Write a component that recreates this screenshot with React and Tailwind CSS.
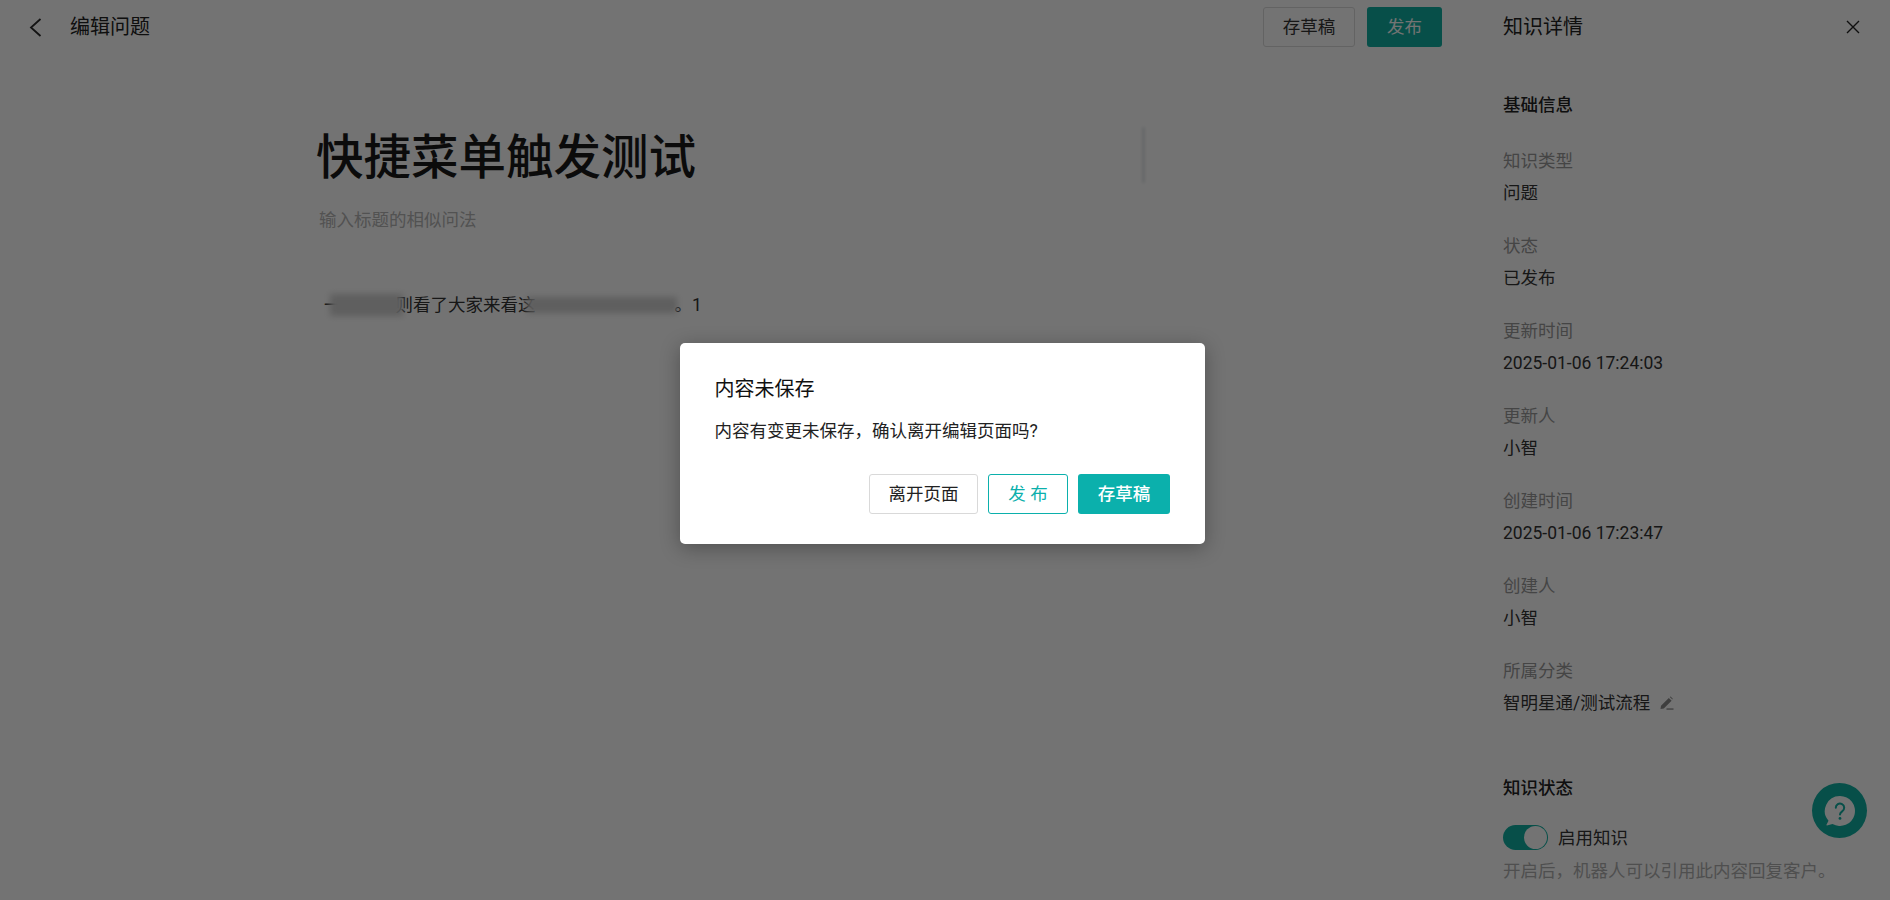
import React from "react";

const details = [
  { label: "知识类型", value: "问题" },
  { label: "状态", value: "已发布" },
  { label: "更新时间", value: "2025-01-06 17:24:03" },
  { label: "更新人", value: "小智" },
  { label: "创建时间", value: "2025-01-06 17:23:47" },
  { label: "创建人", value: "小智" },
];

const PencilIcon = () => (
  <svg width="14" height="15" viewBox="0 0 14 15" className="ml-[10px]">
    <path d="M0.5 13 L1 9.8 L8.8 2 L11.6 4.8 L3.8 12.6 Z M9.8 1 L10.6 0.5 L12.8 2.7 L12.4 3.6 Z" fill="#8a8a8a" />
    <rect x="6.5" y="12.4" width="7" height="1.3" fill="#8a8a8a" />
  </svg>
);

const HelpButton = () => (
  <button className="absolute top-[783px] right-[23px] flex h-[55px] w-[55px] items-center justify-center rounded-full bg-[#10b0a2]">
    <svg width="36" height="36" viewBox="0 0 36 36">
      <path d="M18 3 A15 15 0 1 1 10.5 31 L5 32.5 Q4 32.4 4.6 31.4 L6.5 27.8 A15 15 0 0 1 18 3 Z" fill="#fff" />
      <path
        d="M13.8 14.8 A4.2 4.2 0 1 1 20.2 18.3 C18.8 19.4 18 20 18 21.6"
        fill="none"
        stroke="#10b0a2"
        strokeWidth="2"
        strokeLinecap="round"
      />
      <circle cx="18" cy="25.4" r="1.4" fill="#10b0a2" />
    </svg>
  </button>
);

const App = () => {
  return (
    <div className="relative flex h-[900px] w-[1890px] overflow-hidden bg-white font-['Roboto','Noto_Sans_CJK_SC',sans-serif] text-[17.5px] leading-[26px] text-[#333]">
      {/* left: editor */}
      <div className="w-[1473px] shrink-0">
        <div className="flex h-[54px] items-center pl-[29px] pr-[31px]">
          <svg width="13" height="19" viewBox="0 0 13 19" fill="none" stroke="#2a2a2a" strokeWidth="1.8">
            <path d="M11.5 1 L2 9.5 L11.5 18" />
          </svg>
          <span className="ml-[28px] text-[20px] text-[#222]">编辑问题</span>
          <button className="ml-auto h-10 w-[92px] rounded-[3px] border border-[#dcdcdc] text-[#333]">存草稿</button>
          <button className="ml-[12px] h-10 w-[75px] rounded-[3px] bg-[#10b0a2] text-white">发布</button>
        </div>

        <div className="ml-[316px] flex w-[829px]">
          <div className="flex-1">
            <h1 className="mt-[72px] text-[47.5px] leading-[64px] font-medium text-[#1a1a1a]">快捷菜单触发测试</h1>
            <p className="mt-[17px] pl-[3px] leading-[26px] text-[#b5b5b5]">输入标题的相似问法</p>
            <div className="mt-[59px] flex items-center pl-[8px]">
              <span className="whitespace-nowrap">一</span>
              <span className="relative -ml-[12px] h-[22px] w-[73px] bg-[#d2d2d2] blur-[3px]" />
              <span className="-ml-[7px]">则看了大家来看这</span>
              <span className="relative -ml-[9px] h-[16px] w-[150px] bg-[#d2d2d2] blur-[3px]" />
              <span className="-ml-[2px]">。1</span>
            </div>
          </div>
          <div className="mt-[73px] h-[56px] w-[3px] rounded bg-[#e2e6e8] blur-[1.5px]" />
        </div>
      </div>

      {/* right: knowledge details */}
      <div className="flex-1 pl-[30px]">
        <div className="flex h-[54px] items-center justify-between pr-[30px]">
          <span className="text-[20px] text-[#222]">知识详情</span>
          <svg width="14" height="14" viewBox="0 0 14 14" stroke="#222" strokeWidth="1.4">
            <path d="M1 1 L13 13 M13 1 L1 13" />
          </svg>
        </div>

        <h2 className="mt-[38px] mb-[30px] font-medium text-[#222]">基础信息</h2>

        {details.map((item) => (
          <div key={item.label} className="mb-[27px]">
            <div className="text-[#999]">{item.label}</div>
            <div className="mt-[6px]">{item.value}</div>
          </div>
        ))}

        <div>
          <div className="text-[#999]">所属分类</div>
          <div className="mt-[6px] flex items-center">
            智明星通/测试流程
            <PencilIcon />
          </div>
        </div>

        <h2 className="mt-[59px] font-medium text-[#222]">知识状态</h2>
        <div className="mt-[24px] flex h-[25px] items-center">
          <div className="flex h-[25px] w-[45px] items-center justify-end rounded-full bg-[#10b0a2] pr-[1px]">
            <div className="h-[23px] w-[23px] rounded-full bg-white" />
          </div>
          <span className="ml-[10px]">启用知识</span>
        </div>
        <p className="mt-[8px] text-[#b0b0b0]">开启后，机器人可以引用此内容回复客户。</p>
      </div>

      <HelpButton />

      {/* modal */}
      <div className="absolute inset-0 flex items-start justify-center bg-black/55 pt-[343px] pr-[5px]">
        <div className="h-[201px] w-[525px] rounded-[5px] bg-white pr-[35px] pl-[34.5px] pt-[32px] shadow-[0_4px_20px_rgba(0,0,0,0.3)]">
          <div className="text-[20px] leading-[28px] text-[#111]">内容未保存</div>
          <div className="mt-[15px] leading-[26px] text-[#222]">内容有变更未保存，确认离开编辑页面吗?</div>
          <div className="mt-[30px] flex justify-end gap-[10px]">
            <button className="h-10 w-[109px] rounded-[3px] border border-[#d9d9d9] bg-white text-[#222]">离开页面</button>
            <button className="h-10 w-[80px] rounded-[3px] border border-[#0bb0ac] bg-white text-[#0bb0ac]">发 布</button>
            <button className="h-10 w-[92px] rounded-[3px] bg-[#0bb0ac] font-medium text-white">存草稿</button>
          </div>
        </div>
      </div>
    </div>
  );
};

export default App;
